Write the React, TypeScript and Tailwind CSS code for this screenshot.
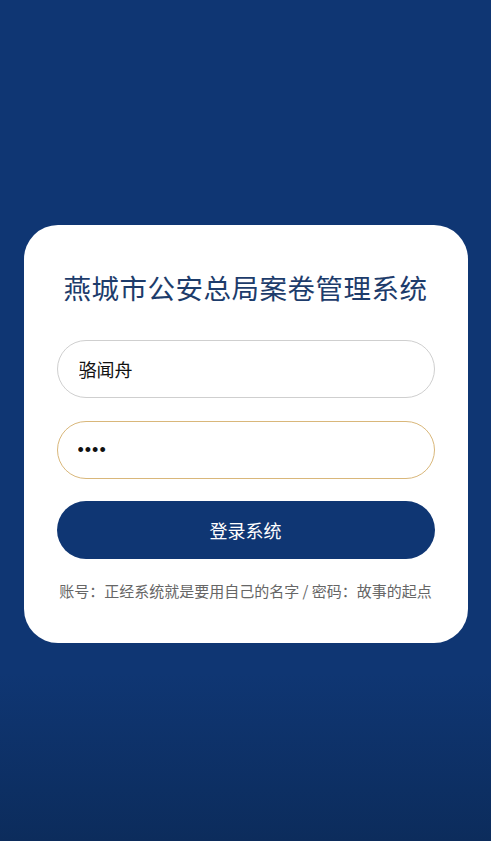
export default function App() {
  return (
    <div
      className="min-h-[841px] w-full flex flex-col items-center bg-[linear-gradient(to_bottom,#0f3673_0%,#0f3673_80%,#0c2c5c_100%)]"
      style={{ fontFamily: '"Noto Sans CJK SC", "Noto Sans", sans-serif' }}
    >
      {/* Login card */}
      <div className="mt-[225px] w-[444px] bg-white rounded-[34px] px-[33px] pt-[42px] pb-[42px] flex flex-col">
        <h1 className="text-center text-[27.5px] leading-[40px] text-[#1d3c6b] font-normal tracking-[0.5px]">
          燕城市公安总局案卷管理系统
        </h1>

        <input
          type="text"
          readOnly
          value="骆闻舟"
          className="mt-[33px] h-[58px] w-full rounded-full border border-[#cfcfcf] px-[21px] text-[18px] text-[#111] outline-none bg-white"
        />

        <input
          type="password"
          readOnly
          value="1234"
          className="mt-[23px] h-[58px] w-full rounded-full border border-[#d9b77a] px-[20px] text-[18px] text-[#111] outline-none bg-white font-['Liberation_Sans',sans-serif] tracking-[1px]"
        />

        <button className="mt-[22px] h-[58px] w-full rounded-full bg-[#0f3673] text-white text-[18px]">
          登录系统
        </button>

        <p className="mt-[22px] text-center text-[15px] leading-[20px] text-[#666] whitespace-nowrap">
          账号：正经系统就是要用自己的名字 / 密码：故事的起点
        </p>
      </div>
    </div>
  );
}
